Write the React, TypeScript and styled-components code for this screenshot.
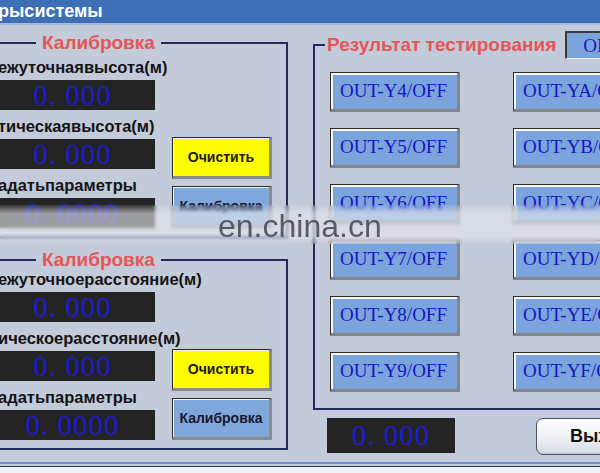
import React from "react";
import styled, { createGlobalStyle } from "styled-components";

const BG = "#c3cad9";
const NAVY = "#1e2c5a";

const GlobalStyle = createGlobalStyle`
  html, body { margin: 0; padding: 0; background: ${BG}; }
  body { font-family: "Liberation Sans", Arial, sans-serif; }
  #root { width: 600px; height: 473px; }
  button { font-family: inherit; }
`;

const Screen = styled.div`
  position: relative;
  width: 600px;
  height: 473px;
  overflow: hidden;
  background: ${BG};
  display: flex;
  flex-direction: column;
`;

const Header = styled.div`
  flex: none;
  height: 23px;
  background: #3d6fb6;
  border-bottom: 2px solid #a7bbdf;
  color: #fff;
  font-weight: bold;
  font-size: 18px;
  line-height: 23px;
  text-indent: -2px;
  white-space: nowrap;
`;

const Main = styled.div`
  flex: 1;
  display: flex;
  align-items: flex-start;
  gap: 25px;
  padding-top: 17px;
`;

const Footer = styled.div`
  flex: none;
  height: 9px;
  border-top: 2px solid #7290c8;
  background: linear-gradient(${BG} 0 2px, #2e3850 2px 3px, #eff2f8 3px);
`;

const LeftColumn = styled.div`
  flex: none;
  width: 304px;
  margin-left: -16px;
  display: flex;
  flex-direction: column;
  gap: 21px;
`;

const GroupBox = styled.div`
  border: 2px solid ${NAVY};
  display: flex;
  flex-direction: column;
`;

const GroupTitle = styled.div<{ $indent: number; $pad: number }>`
  align-self: flex-start;
  display: flex;
  align-items: center;
  gap: 9px;
  height: 22px;
  margin: -12px 0 -11px ${(p) => p.$indent}px;
  padding: 0 ${(p) => p.$pad}px;
  background: ${BG};
  color: #e35757;
  font-size: 19px;
  font-weight: bold;
  white-space: nowrap;
`;

const CalBody = styled.div<{ $padTop: number }>`
  display: flex;
  align-items: flex-end;
  gap: 17px;
  padding: ${(p) => p.$padTop}px 14px 8px 4px;
`;

const Fields = styled.div`
  width: 165px;
  display: flex;
  flex-direction: column;
  gap: 3px;
`;

const Field = styled.div`
  display: flex;
  flex-direction: column;
`;

const FieldLabel = styled.div`
  height: 26px;
  line-height: 26px;
  padding-left: 8px;
  font-size: 16.5px;
  font-weight: bold;
  color: #141414;
  white-space: nowrap;
`;

const Display = styled.div<{ $w?: number; $h?: number }>`
  width: ${(p) => (p.$w ? `${p.$w}px` : "auto")};
  height: ${(p) => p.$h ?? 30}px;
  line-height: ${(p) => p.$h ?? 30}px;
  background: #242424;
  color: #1d1dd2;
  font-family: "Liberation Serif", "Times New Roman", serif;
  font-size: 29px;
  letter-spacing: 1px;
  text-align: center;
  white-space: pre;
  overflow: hidden;
`;

const SideButtons = styled.div`
  width: 100px;
  display: flex;
  flex-direction: column;
  gap: 7px;
`;

const PanelButton = styled.button<{ $tone: "yellow" | "blue" }>`
  height: 42px;
  margin: 0;
  padding: 0;
  border-style: solid;
  border-width: 1px 3px 3px 1px;
  border-color: #2a2a2a #8a8a8a #8a8a8a #2a2a2a;
  box-shadow: inset 1px 1px 0 #f4f4f4;
  background: ${(p) => (p.$tone === "yellow" ? "#fdfd00" : "#80a7dc")};
  color: ${(p) => (p.$tone === "yellow" ? "#1f1a10" : "#15182e")};
  font-size: 14px;
  font-weight: bold;
  white-space: nowrap;
`;

const RightColumn = styled.div`
  flex: none;
  width: 430px;
  margin-top: 2px;
  display: flex;
  flex-direction: column;
`;

const StatusBox = styled.div`
  width: 60px;
  height: 28px;
  box-sizing: border-box;
  border-style: solid;
  border-width: 2px 1px 1px 2px;
  border-color: #3a3a3a #f2f2f2 #f2f2f2 #3a3a3a;
  background: #7ca4dc;
  color: #1616c4;
  font-family: "Liberation Serif", "Times New Roman", serif;
  font-size: 19px;
  font-weight: normal;
  line-height: 25px;
  padding-left: 16px;
`;

const ResultGrid = styled.div`
  display: grid;
  grid-template-columns: 130px 130px;
  grid-auto-rows: 40px;
  column-gap: 53px;
  row-gap: 16px;
  padding: 27px 0 16px 15px;
`;

const OutButton = styled.button`
  margin: 0;
  padding: 0 0 0 9px;
  text-align: left;
  border-style: solid;
  border-width: 1px 3px 3px 1px;
  border-color: #2a2a2a #858585 #858585 #2a2a2a;
  box-shadow: inset 2px 2px 0 #f6f6f6;
  background: #7ca4dc;
  color: #1515c6;
  font-family: "Liberation Serif", "Times New Roman", serif;
  font-size: 19px;
  white-space: nowrap;
`;

const ResultFooter = styled.div`
  display: flex;
  align-items: flex-start;
  gap: 81px;
  padding-left: 14px;
  margin-top: 8px;
`;

const ExitButton = styled.button`
  width: 128px;
  height: 37px;
  margin: 0;
  padding: 0 0 0 33px;
  text-align: left;
  border: 1px solid #4c5260;
  border-radius: 7px;
  background: linear-gradient(#ffffff, #eef0f4 50%, #d6dbe4);
  box-shadow: inset 0 -1px 0 #bfc6d2;
  color: #111;
  font-size: 18px;
  font-weight: bold;
  white-space: nowrap;
`;

const Watermark = styled.div`
  position: absolute;
  left: 0;
  right: 0;
  top: 205px;
  height: 39px;
  display: flex;
  align-items: center;
  padding-left: 218px;
  background: linear-gradient(
    rgba(228, 230, 236, 0.1),
    rgba(228, 230, 236, 0.62) 22%,
    rgba(228, 230, 236, 0.62) 80%,
    rgba(228, 230, 236, 0.1)
  );
  backdrop-filter: blur(1.5px);
  pointer-events: none;
`;

const WatermarkText = styled.span`
  font-family: "Liberation Sans", Arial, sans-serif;
  font-size: 32px;
  line-height: 32px;
  margin-top: 2px;
  color: rgba(66, 68, 82, 0.85);
`;

type CalField = { label: string; value: string };

const group1: CalField[] = [
  { label: "ежуточнаявысота(м)", value: "0. 000" },
  { label: "тическаявысота(м)", value: "0. 000" },
  { label: "адатьпараметры", value: "0. 0000" },
];

const group2: CalField[] = [
  { label: "ежуточноерасстояние(м)", value: "0. 000" },
  { label: "ическоерасстояние(м)", value: "0. 000" },
  { label: "адатьпараметры", value: "0. 0000" },
];

const outputs = ["4", "A", "5", "B", "6", "C", "7", "D", "8", "E", "9", "F"];

function CalibrationGroup({ fields, padTop }: { fields: CalField[]; padTop: number }) {
  return (
    <GroupBox>
      <GroupTitle $indent={50} $pad={6}>Калибровка</GroupTitle>
      <CalBody $padTop={padTop}>
        <Fields>
          {fields.map((f) => (
            <Field key={f.label}>
              <FieldLabel>{f.label}</FieldLabel>
              <Display>{f.value}</Display>
            </Field>
          ))}
        </Fields>
        <SideButtons>
          <PanelButton $tone="yellow">Очистить</PanelButton>
          <PanelButton $tone="blue">Калибровка</PanelButton>
        </SideButtons>
      </CalBody>
    </GroupBox>
  );
}

export default function App() {
  return (
    <Screen>
      <GlobalStyle />
      <Header>рысистемы</Header>
      <Main>
        <LeftColumn>
          <CalibrationGroup fields={group1} padTop={11} />
          <CalibrationGroup fields={group2} padTop={6} />
        </LeftColumn>
        <RightColumn>
          <GroupBox>
            <GroupTitle $indent={10} $pad={2}>
              Результат тестирования
              <StatusBox>OFF</StatusBox>
            </GroupTitle>
            <ResultGrid>
              {outputs.map((o) => (
                <OutButton key={o}>{`OUT-Y${o}/OFF`}</OutButton>
              ))}
            </ResultGrid>
          </GroupBox>
          <ResultFooter>
            <Display $w={128} $h={35}>0. 000</Display>
            <ExitButton>Выход</ExitButton>
          </ResultFooter>
        </RightColumn>
      </Main>
      <Footer />
      <Watermark>
        <WatermarkText>en.china.cn</WatermarkText>
      </Watermark>
    </Screen>
  );
}
